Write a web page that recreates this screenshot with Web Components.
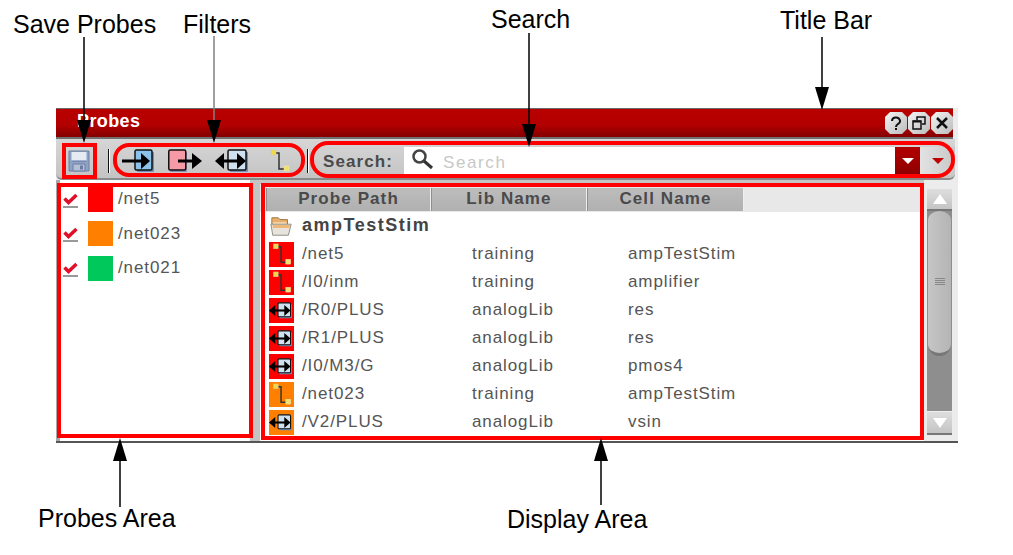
<!DOCTYPE html>
<html>
<head>
<meta charset="utf-8">
<title>Probes</title>
<style>
  html, body { margin: 0; background: #fff; }
  body { width: 1013px; height: 555px; overflow: hidden; font-family: "Liberation Sans", Arial, sans-serif; }
</style>
</head>
<body>
<annotated-figure>
  <probes-window>
    <title-bar slot="title">Probes</title-bar>
    <probe-toolbar slot="toolbar"></probe-toolbar>
    <probe-list slot="probes">
      <probe-entry color="#ff0000">/net5</probe-entry>
      <probe-entry color="#ff8000">/net023</probe-entry>
      <probe-entry color="#00c85a">/net021</probe-entry>
    </probe-list>
    <probe-table slot="display">
      <table-row icon="folder" bold>ampTestStim</table-row>
      <table-row icon="net" bg="#ff0000" lib="training" cell="ampTestStim">/net5</table-row>
      <table-row icon="net" bg="#ff0000" lib="training" cell="amplifier">/I0/inm</table-row>
      <table-row icon="inout" bg="#ff0000" lib="analogLib" cell="res">/R0/PLUS</table-row>
      <table-row icon="inout" bg="#ff0000" lib="analogLib" cell="res">/R1/PLUS</table-row>
      <table-row icon="inout" bg="#ff0000" lib="analogLib" cell="pmos4">/I0/M3/G</table-row>
      <table-row icon="net" bg="#ff8000" lib="training" cell="ampTestStim">/net023</table-row>
      <table-row icon="inout" bg="#ff8000" lib="analogLib" cell="vsin">/V2/PLUS</table-row>
    </probe-table>
    <scroll-bar slot="scroll"></scroll-bar>
  </probes-window>

  <hi-box slot="marks" style="left:62px;top:143px;width:35px;height:36px"></hi-box>
  <hi-box slot="marks" radius="16" style="left:113px;top:143px;width:192px;height:34px"></hi-box>
  <hi-box slot="marks" radius="18" style="left:310px;top:141px;width:645px;height:37px"></hi-box>
  <hi-box slot="marks" style="left:57px;top:183px;width:196px;height:255px"></hi-box>
  <hi-box slot="marks" style="left:261px;top:183px;width:663px;height:257px"></hi-box>

  <call-out slot="marks" x="84" y1="37" y2="143" text-x="13" text-y="9">Save Probes</call-out>
  <call-out slot="marks" x="214" y1="36" y2="143" text-x="183" text-y="9" shade="#808080">Filters</call-out>
  <call-out slot="marks" x="529" y1="33" y2="147" text-x="491" text-y="4">Search</call-out>
  <call-out slot="marks" x="822" y1="37" y2="110" text-x="780" text-y="5">Title Bar</call-out>
  <call-out slot="marks" x="120" y1="507" y2="438" text-x="38" text-y="503">Probes Area</call-out>
  <call-out slot="marks" x="601" y1="505" y2="438" text-x="507" text-y="504">Display Area</call-out>
</annotated-figure>

<script>
const ICONS = {
  save: `<svg width="22" height="22" viewBox="0 0 22 22"><path d="M1 1h20v20H1z" fill="#8ea2c8" stroke="#6f7f9f"/><path d="M3.500 2h15v9h-15z" fill="#e6eaf2"/><path d="M3.500 11h15" stroke="#5f73a3"/><path d="M5 14h12v7H5z" fill="#b4c0d6" stroke="#6f7f9f"/><path d="M12 15.500h3v4h-3z" fill="#6a7da8"/></svg>`,
  input: `<svg width="34" height="24" viewBox="0 0 34 24"><rect x="15" y="3" width="17" height="20" rx="1" fill="#6f8fb8"/><rect x="13" y="1" width="17" height="20" rx="1.500" fill="#8cc2ea" stroke="#111" stroke-width="1.500"/><path d="M0 12h21" stroke="#000" stroke-width="3"/><path d="M19 4l9 8-9 8z" fill="#000"/></svg>`,
  output: `<svg width="34" height="24" viewBox="0 0 34 24"><rect x="2" y="3" width="17" height="20" rx="1" fill="#8a8fb0"/><rect x="0.750" y="1" width="17" height="20" rx="1.500" fill="#f59aa6" stroke="#111" stroke-width="1.500"/><path d="M10 12h16" stroke="#000" stroke-width="3"/><path d="M24 4l10 8-10 8z" fill="#000"/></svg>`,
  inout: `<svg width="36" height="24" viewBox="0 0 36 24"><rect x="15" y="3" width="18" height="20" rx="1" fill="#6f8fb8"/><rect x="13" y="1" width="18" height="20" rx="1.500" fill="#cfe0ee" stroke="#111" stroke-width="1.500"/><path d="M5 12h22" stroke="#000" stroke-width="3"/><path d="M9 4l-9 8 9 8zM22 4l9 8-9 8z" fill="#000"/></svg>`,
  net: `<svg width="20" height="24" viewBox="0 0 20 24"><path d="M5 4h4v16h7" fill="none" stroke="#333" stroke-width="1.500"/><rect x="1" y="1" width="5" height="5" fill="#f2d84a" stroke="#c9c9a0" stroke-width=".5"/><rect x="14" y="17" width="5" height="5" fill="#f2e06a" stroke="#e8e8c0" stroke-width=".5"/></svg>`,
  search: `<svg width="23" height="23" viewBox="0 0 23 23"><circle cx="8.500" cy="8.500" r="6" fill="#fff" stroke="#444" stroke-width="2.500"/><path d="M13 13l8 7" stroke="#333" stroke-width="3"/></svg>`,
  check: `<svg width="17" height="17" viewBox="0 0 17 17"><path d="M2.500 7.500l4 4L14.500 4" fill="none" stroke="#e0102a" stroke-width="3.500"/><path d="M1 16h15" stroke="#777" stroke-width="1.500"/></svg>`,
  folder: `<svg width="25" height="25" viewBox="0 0 25 25"><path d="M2 5V3h7l2 2h8v5H2z" fill="#e8b06a" stroke="#9a7040"/><path d="M3 8h15v4H3z" fill="#fbe3c0"/><path d="M1 10h22l-3 12H3z" fill="#e8e4dc" stroke="#8a8a80"/><path d="M3 11h19l-1 3H3z" fill="#f0b878"/></svg>`,
  help: `<svg width="12" height="15" viewBox="0 0 12 15"><path d="M2 5a4 3.500 0 1 1 6 3c-1.500 1-2 1.500-2 3" fill="none" stroke="#111" stroke-width="2"/><path d="M5 12h2v2H5z" fill="#111"/></svg>`,
  restore: `<svg width="14" height="14" viewBox="0 0 14 14"><path d="M5 4V1h8v7h-3" fill="none" stroke="#111" stroke-width="1.500"/><path d="M1 5h8v8H1z" fill="none" stroke="#111" stroke-width="1.500"/><path d="M1 5.500h8" stroke="#111" stroke-width="2"/></svg>`,
  close: `<svg width="14" height="14" viewBox="0 0 14 14"><path d="M2 2l10 10M12 2L2 12" stroke="#111" stroke-width="2.500"/></svg>`
}

class Base extends HTMLElement {
  constructor(...args) {
    super(...args)
    this.root = this.attachShadow({ mode: "open" })
  }
}

class AnnotatedFigure extends Base {
  connectedCallback() {
    this.root.innerHTML = `
    <style>
    :host { display: block; position: relative; width: 1013px; height: 555px; padding: 108px 0 0 56px; box-sizing: border-box; }
    </style>
    <slot></slot>
    <slot name="marks"></slot>`
  }
}

class HiBox extends Base {
  connectedCallback() {
    const radius = this.getAttribute("radius") || 0
    this.root.innerHTML = `
    <style>
    :host { display: block; position: absolute; box-sizing: border-box; border: 4px solid #ff0000; border-radius: ${radius}px; pointer-events: none; }
    </style>`
  }
}

class CallOut extends Base {
  connectedCallback() {
    const x = +this.getAttribute("x")
    const y1 = +this.getAttribute("y1")
    const y2 = +this.getAttribute("y2")
    const shade = this.getAttribute("shade") || "#000"
    const top = Math.min(y1, y2)
    const h = Math.abs(y2 - y1)
    // arrowhead always sits on the y2 end
    const head = y2 > y1
      ? `M0 ${h - 23}h14L7 ${h}z`
      : `M0 23h14L7 0z`
    const line = y2 > y1 ? `M7 0V${h - 22}` : `M7 22V${h}`
    this.root.innerHTML = `
    <style>
    :host { display: block; position: absolute; left: 0; top: 0; }
    .label { position: absolute; left: ${this.getAttribute("text-x")}px; top: ${this.getAttribute("text-y")}px; font: 25px/30px "Liberation Sans", Arial, sans-serif; color: #000; white-space: nowrap; }
    svg { position: absolute; left: ${x - 7}px; top: ${top}px; overflow: visible; }
    </style>
    <span class="label"><slot></slot></span>
    <svg width="14" height="${h}"><path d="${line}" stroke="${shade}" stroke-width="1.500" fill="none"/><path d="${head}" fill="#000"/></svg>`
  }
}

class ProbesWindow extends Base {
  connectedCallback() {
    this.root.innerHTML = `
    <style>
    :host { display: grid; width: 902px; height: 335px; box-sizing: border-box; grid-template-rows: 31px 41px 261px 2px; background: #ececec; font: 17px "Liberation Sans", Arial, sans-serif; letter-spacing: .9px; }
    .body { display: grid; grid-template-columns: 4px 190px 10px 664px 3px 25px 6px; background: #c4c4c4; min-height: 0; }
    .edge { background: #a8a8a8; }
    .rail { background: #ececec; }
    .foot { background: #555; }
    </style>
    <slot name="title"></slot>
    <slot name="toolbar"></slot>
    <div class="body">
      <div class="edge"></div>
      <slot name="probes"></slot>
      <div></div>
      <slot name="display"></slot>
      <div class="rail"></div>
      <slot name="scroll"></slot>
      <div class="rail"></div>
    </div>
    <div class="foot"></div>`
  }
}

class TitleBar extends Base {
  connectedCallback() {
    this.root.innerHTML = `
    <style>
    :host { display: flex; align-items: center; box-sizing: border-box; width: 897px; padding: 0 0 0 21px; background: linear-gradient(#b80000 0, #b40000 55%, #840000 100%); border-top: 1px solid #6a6a6a; border-bottom: 2px solid #707070; color: #fff; font-weight: bold; font-size: 18px; letter-spacing: .4px; }
    .text { flex: 1; padding-bottom: 3px; }
    .btn { width: 22px; height: 22px; margin-left: 1px; display: flex; align-items: center; justify-content: center; background: linear-gradient(135deg, #f4f4f4, #bbb); clip-path: polygon(5px 0, 17px 0, 100% 5px, 100% 17px, 17px 100%, 5px 100%, 0 17px, 0 5px); }
    </style>
    <span class="text"><slot></slot></span>
    <span class="btn">${ICONS.help}</span>
    <span class="btn">${ICONS.restore}</span>
    <span class="btn">${ICONS.close}</span>`
  }
}

class ProbeToolbar extends Base {
  connectedCallback() {
    this.root.innerHTML = `
    <style>
    :host { display: flex; align-items: center; box-sizing: border-box; width: 899px; height: 41px; padding: 4px 0 0 12px; background: linear-gradient(#d6d6d6, #c4c4c4); border-bottom: 2px solid #8a8a8a; border-radius: 0 0 6px 6px; }
    .save { display: flex; margin-right: 18px; }
    .sep { width: 1px; height: 24px; background: #111; border-right: 1px solid #fff; margin-right: 12px; }
    .tool { display: flex; }
    .label { font-weight: bold; color: #4a4a4a; font-size: 17px; letter-spacing: 1.1px; width: 81px; margin-left: 14px; padding-top: 3px; }
    .field { display: flex; align-items: center; width: 491px; height: 28px; background: #fff; box-sizing: border-box; padding-left: 7px; color: #c8c8c8; font-size: 17px; letter-spacing: 1.6px; }
    .field svg { flex: none; margin-top: -2px; }
    .field span { margin-left: 9px; padding-top: 4px; }
    .drop { width: 25px; height: 28px; background: linear-gradient(#b40000, #8c0000); display: flex; align-items: center; justify-content: center; }
    .more { width: 35px; height: 28px; background: linear-gradient(90deg, #e2e2e2, #c8c8c8); display: flex; align-items: center; justify-content: center; }
    .tri { width: 0; height: 0; border: 6px solid transparent; border-bottom: 0; border-top-width: 6px; }
    </style>
    <span class="save">${ICONS.save}</span>
    <span class="sep"></span>
    <span class="tool" style="margin-right:12px">${ICONS.input}</span>
    <span class="tool" style="margin-right:13px">${ICONS.output}</span>
    <span class="tool" style="margin-right:19px">${ICONS.inout}</span>
    <span class="tool" style="margin-right:17px">${ICONS.net}</span>
    <span class="sep" style="margin-right:0"></span>
    <span class="label">Search:</span>
    <div class="field">${ICONS.search}<span>Search</span></div>
    <div class="drop"><i class="tri" style="border-top-color:#fff"></i></div>
    <div class="more"><i class="tri" style="border-top-color:#c00000"></i></div>`
  }
}

class ProbeList extends Base {
  connectedCallback() {
    this.root.innerHTML = `
    <style>
    :host { display: block; background: #fff; padding-top: 2px; overflow: hidden; }
    </style>
    <slot></slot>`
  }
}

class ProbeEntry extends Base {
  connectedCallback() {
    this.root.innerHTML = `
    <style>
    :host { display: flex; align-items: center; height: 34.5px; color: #555; padding-left: 2px; }
    .check { display: flex; width: 26px; }
    .swatch { width: 25px; height: 25px; margin-right: 5px; background: ${this.getAttribute("color")}; }
    </style>
    <span class="check">${ICONS.check}</span>
    <span class="swatch"></span>
    <slot></slot>`
  }
}

class ProbeTable extends Base {
  connectedCallback() {
    this.root.innerHTML = `
    <style>
    :host { display: block; background: #fff; margin-top: 4px; overflow: hidden; }
    .head { display: flex; height: 28px; padding-top: 4px; box-sizing: border-box; background: #e8e8e8; }
    .col { box-sizing: border-box; height: 23px; padding-bottom: 1px; display: flex; align-items: center; justify-content: center; background: linear-gradient(#bdbdbd, #b0b0b0); border-right: 1px solid #eee; border-left: 1px solid #8f8f8f; font-weight: bold; color: #4a4a4a; letter-spacing: 1.1px; }
    </style>
    <div class="head">
      <div class="col" style="width:165px;margin-left:6px">Probe Path</div>
      <div class="col" style="width:156px">Lib Name</div>
      <div class="col" style="width:157px">Cell Name</div>
    </div>
    <slot></slot>`
  }
}

class TableRow extends Base {
  connectedCallback() {
    const kind = this.getAttribute("icon")
    const bg = this.getAttribute("bg") || "transparent"
    const bold = this.hasAttribute("bold")
    this.root.innerHTML = `
    <style>
    :host { display: flex; align-items: center; height: 28px; color: #555; padding-left: 9px; white-space: nowrap; }
    .icon { width: 25px; height: 25px; display: flex; align-items: center; justify-content: center; background: ${bg}; margin-right: 8px; flex: none; }
    .icon svg { max-width: 25px; height: 23px; }
    .path { width: 170px; flex: none; ${bold ? "font-weight: bold; color: #444; font-size: 18px; letter-spacing: 1.5px; padding-bottom: 2px;" : ""} }
    .lib { width: 156px; flex: none; }
    </style>
    <span class="icon">${ICONS[kind]}</span>
    <span class="path"><slot></slot></span>
    <span class="lib">${this.getAttribute("lib") || ""}</span>
    <span>${this.getAttribute("cell") || ""}</span>`
  }
}

class ScrollBar extends Base {
  connectedCallback() {
    this.root.innerHTML = `
    <style>
    :host { display: flex; flex-direction: column; padding: 9px 0 6px; background: #ececec; box-sizing: border-box; }
    .btn { height: 22px; flex: none; display: flex; align-items: center; justify-content: center; background: linear-gradient(#dedede, #c4c4c4); border-bottom: 2px solid #777; box-sizing: border-box; }
    .down { height: 24px; margin-top: auto; border-top: 1px solid #eee; }
    .up { width: 0; height: 0; border: 7px solid transparent; border-top: 0; border-bottom: 10px solid #fff; }
    .dn { width: 0; height: 0; border: 7px solid transparent; border-bottom: 0; border-top: 10px solid #fff; }
    .track { flex: 1; background: #8e8e8e; display: flex; flex-direction: column; }
    .thumb { height: 145px; margin: 0 1px; background: linear-gradient(90deg, #c6c6c6, #b4b4b4); border-bottom: 3px solid #777; border-radius: 12px 12px 12px 12px / 10px 10px 12px 12px; display: flex; align-items: center; justify-content: center; box-sizing: border-box; }
    .grip { width: 10px; height: 8px; background: repeating-linear-gradient(#888 0 1px, transparent 1px 2px); }
    </style>
    <div class="btn"><i class="up"></i></div>
    <div class="track"><div class="thumb"><div class="grip"></div></div></div>
    <div class="btn down"><i class="dn"></i></div>`
  }
}

customElements.define("annotated-figure", AnnotatedFigure)
customElements.define("hi-box", HiBox)
customElements.define("call-out", CallOut)
customElements.define("probes-window", ProbesWindow)
customElements.define("title-bar", TitleBar)
customElements.define("probe-toolbar", ProbeToolbar)
customElements.define("probe-list", ProbeList)
customElements.define("probe-entry", ProbeEntry)
customElements.define("probe-table", ProbeTable)
customElements.define("table-row", TableRow)
customElements.define("scroll-bar", ScrollBar)
</script>
</body>
</html>
